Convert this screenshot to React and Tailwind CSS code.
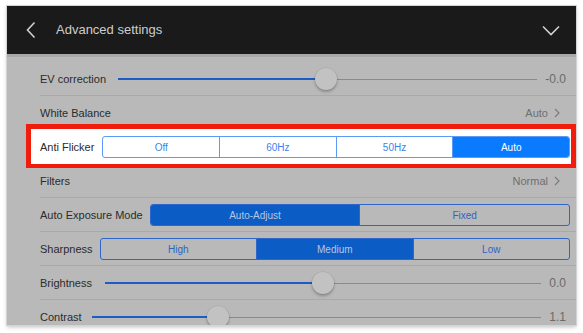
import React from "react";

const font = { fontFamily: '"Liberation Sans", Arial, sans-serif' };

function Row({ label, children, last }) {
  return (
    <div className={`relative flex h-[34px] shrink-0 items-center pl-[33px] pr-[6px] ${last ? "" : ""}`}>
      <span className="whitespace-nowrap text-[11px] text-[#2b2b2b]">{label}</span>
      <div className="flex min-w-0 flex-1 items-center">{children}</div>
      {!last && <div className="absolute bottom-0 left-[33px] right-0 h-px bg-[#a9a9a9]" />}
    </div>
  );
}

function Slider({ gap, pct, value, endGap }) {
  return (
    <div className="flex flex-1 items-center" style={{ paddingLeft: gap }}>
      <div className="relative flex h-[22px] flex-1 items-center">
        <div className="h-[1.5px] bg-[#1d5bc6]" style={{ width: pct + "%" }} />
        <div className="h-px flex-1 bg-[#8a8a8a]" />
        <div
          className="absolute top-1/2 h-[22px] w-[22px] -translate-x-1/2 -translate-y-1/2 rounded-full bg-[#c2c2c2] shadow-[0_2px_3px_rgba(0,0,0,0.25),0_0_0_0.5px_rgba(0,0,0,0.08)]"
          style={{ left: pct + "%" }}
        />
      </div>
      <span className="whitespace-nowrap pr-[4px] text-right text-[12px] text-[#6a6a6a]" style={{ paddingLeft: endGap }}>
        {value}
      </span>
    </div>
  );
}

function Seg({ items, selected, left, bright }) {
  const border = bright ? "border-[#5b9bf6]" : "border-[#3066c9]";
  const text = bright ? "text-[#3c83ef]" : "text-[#2e63c6]";
  const selBg = bright ? "bg-[#0a7aff] text-white" : "bg-[#0b5cc4] text-[#b7c6e3]";
  return (
    <div
      className={`flex h-[22px] flex-1 overflow-hidden rounded-[3px] border ${border}`}
      style={{ marginLeft: left }}
    >
      {items.map((it, i) => (
        <div
          key={it}
          className={`flex flex-1 items-center justify-center text-[10px] ${i > 0 ? "border-l " + border : ""} ${
            i === selected ? selBg : text
          }`}
        >
          {it}
        </div>
      ))}
    </div>
  );
}

function Value({ text }) {
  return (
    <div className="ml-auto flex items-center gap-[6px] pr-[10px] text-[11px] text-[#6e6e6e]">
      <span>{text}</span>
      <svg width="6" height="10" viewBox="0 0 6 10" fill="none">
        <path d="M1 1l4 4-4 4" stroke="#7a7a7a" strokeWidth="1.1" />
      </svg>
    </div>
  );
}

export default function App() {
  return (
    <div className="h-[333px] w-[583px] bg-white pl-[7px] pt-[6px]" style={font}>
      <div className="flex h-[319px] w-[569px] flex-col overflow-hidden bg-[#b9b9b9] shadow-[0_0_0_1px_#d4d4d4,0_2px_4px_rgba(0,0,0,0.25)]">
        <div className="flex h-[48px] shrink-0 items-center bg-[#1a1a1a] pl-[19px] pr-[16px]">
          <svg width="10" height="18" viewBox="0 0 10 18" fill="none">
            <path d="M8.5 1.5L1.5 9l7 7.5" stroke="#cfcfcf" strokeWidth="1.6" />
          </svg>
          <span className="ml-[20px] text-[13px] text-[#cdcdcd]">Advanced settings</span>
          <svg className="ml-auto" width="18" height="11" viewBox="0 0 18 11" fill="none">
            <path d="M1 1.5l8 8 8-8" stroke="#d0d0d0" strokeWidth="1.6" />
          </svg>
        </div>
        <div className="h-[3px] shrink-0 bg-[#a8a8a8]" />
        <div className="h-[5px] shrink-0" />
        <Row label="EV correction">
          <Slider gap={12} pct={49.5} value="-0.0" endGap={8} />
        </Row>
        <Row label="White Balance">
          <Value text="Auto" />
        </Row>
        <div className="relative flex h-[34px] shrink-0 items-center pl-[33px] pr-[6px]">
          <div className="absolute bottom-[-4px] left-[19px] right-0 top-[-6px] border-[5px] border-b-[4px] border-[#f01c0c] bg-white" />
          <span className="relative whitespace-nowrap text-[11px] text-[#2b2b2b]">Anti Flicker</span>
          <div className="relative flex flex-1">
            <Seg items={["Off", "60Hz", "50Hz", "Auto"]} selected={3} left={8} bright />
          </div>
        </div>
        <Row label="Filters">
          <Value text="Normal" />
        </Row>
        <Row label="Auto Exposure Mode">
          <Seg items={["Auto-Adjust", "Fixed"]} selected={0} left={7} />
        </Row>
        <Row label="Sharpness">
          <Seg items={["High", "Medium", "Low"]} selected={1} left={7} />
        </Row>
        <Row label="Brightness">
          <Slider gap={13} pct={50} value="0.0" endGap={8} />
        </Row>
        <Row label="Contrast" last>
          <Slider gap={10} pct={28} value="1.1" endGap={8} />
        </Row>
      </div>
    </div>
  );
}
